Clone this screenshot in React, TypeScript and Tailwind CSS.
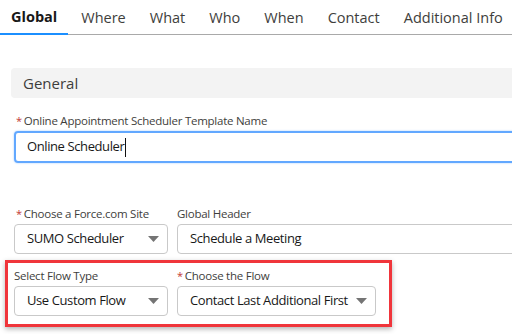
import React from "react";

const tabs = ["Global", "Where", "What", "Who", "When", "Contact", "Additional Info"];

function Label({ text, required }: { text: string; required?: boolean }) {
  return (
    <div className="h-[16px] flex items-center text-[11.5px] tracking-[-0.25px] leading-[16px] text-[#3e3e3c] whitespace-nowrap">
      {required && <span className="text-[#c23934] mr-[2px] text-[11px]">*</span>}
      {text}
    </div>
  );
}

function Caret() {
  return (
    <svg width="11" height="6" viewBox="0 0 11 6" className="shrink-0">
      <path d="M0 0 L11 0 L5.5 6 Z" fill="#747474" />
    </svg>
  );
}

function Select({ value, width }: { value: string; width: string }) {
  return (
    <div
      className={`${width} h-[30px] border border-[#c9c9c9] rounded-[4px] bg-white flex items-center justify-between pl-[12px] pr-[8px] text-[13px] tracking-[-0.4px] text-[#181818] whitespace-nowrap`}
    >
      <span>{value}</span>
      <Caret />
    </div>
  );
}

export default function App() {
  return (
    <div
      className="w-[512px] h-[334px] overflow-hidden bg-white"
      style={{ fontFamily: '"Open Sans", "Noto Sans", sans-serif' }}
    >
      {/* Tabs */}
      <div className="flex h-[35px] border-b border-[#a9a9a9]">
        {tabs.map((t, i) => (
          <div
            key={t}
            className={`h-[35px] px-[11px] mr-[2px] flex items-center text-[14.5px] whitespace-nowrap ${
              i === 0
                ? "font-bold text-[#181818] border-b-2 border-[#1b8fff]"
                : "text-[#3e3e3c] "
            }`}
          >
            {t}
          </div>
        ))}
      </div>

      {/* Section header */}
      <div className="mt-[33px] ml-[11px] h-[30px] bg-[#f3f3f3] rounded-l-[4px] flex items-center pl-[12px] text-[15px] text-[#3e3e3c]">
        General
      </div>

      <div className="pl-[14px]">
        <div className="mt-[15px] pl-[2px]">
          <Label text="Online Appointment Scheduler Template Name" required />
        </div>
        <div className="mt-[2px] w-[520px] h-[32px] border-2 border-[#62a8ff] rounded-[4px] shadow-[0_0_2px_#9cc8ff] flex items-center pl-[11px] text-[13px] tracking-[-0.4px] text-[#181818]">
          Online Scheduler
          <span className="inline-block w-[1px] h-[19px] bg-[#111] ml-[1px]" />
        </div>

        <div className="mt-[43px] flex gap-[9px]">
          <div className="w-[154px]">
            <div className="pl-[2px]">
              <Label text="Choose a Force.com Site" required />
            </div>
            <div className="mt-[2px]">
              <Select value="SUMO Scheduler" width="w-[154px]" />
            </div>
          </div>
          <div>
            <Label text="Global Header" />
            <div className="mt-[2px] w-[360px] h-[30px] border border-[#c9c9c9] rounded-[4px] flex items-center pl-[12px] text-[13px] tracking-[-0.4px] text-[#181818]">
              Schedule a Meeting
            </div>
          </div>
        </div>
      </div>

      {/* Highlighted row */}
      <div className="mt-[6px] ml-[5px] w-[387px] border-[3px] border-[#f0353b] shadow-[0_2px_5px_rgba(0,0,0,0.3)] pl-[6px] pt-[5px] pb-[8px] flex gap-[9px]">
        <div className="w-[154px]">
          <Label text="Select Flow Type" />
          <div className="mt-[2px]">
            <Select value="Use Custom Flow" width="w-[154px]" />
          </div>
        </div>
        <div>
          <Label text="Choose the Flow" required />
          <div className="mt-[2px]">
            <Select value="Contact Last Additional First" width="w-[199px]" />
          </div>
        </div>
      </div>
    </div>
  );
}
